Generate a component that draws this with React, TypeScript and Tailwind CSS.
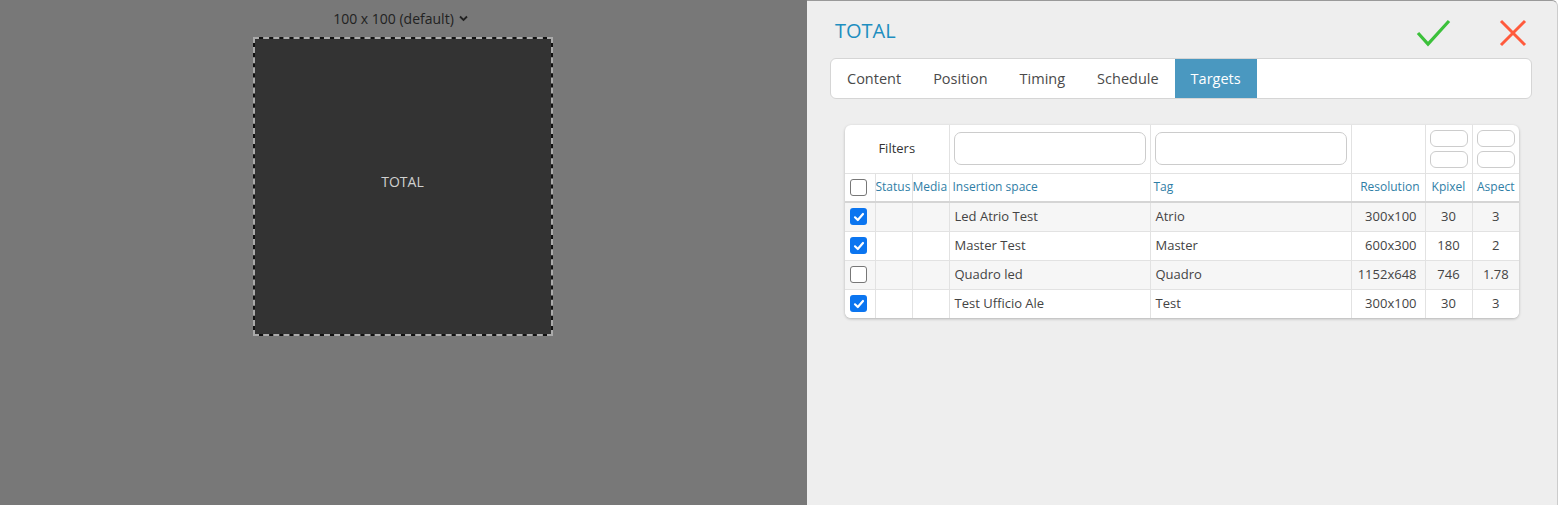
import React from "react";

const font = { fontFamily: '"Open Sans", "Noto Sans", sans-serif' };

type Row = { checked: boolean; name: string; tag: string; res: string; kp: string; asp: string };
const rows: Row[] = [
  { checked: true, name: "Led Atrio Test", tag: "Atrio", res: "300x100", kp: "30", asp: "3" },
  { checked: true, name: "Master Test", tag: "Master", res: "600x300", kp: "180", asp: "2" },
  { checked: false, name: "Quadro led", tag: "Quadro", res: "1152x648", kp: "746", asp: "1.78" },
  { checked: true, name: "Test Ufficio Ale", tag: "Test", res: "300x100", kp: "30", asp: "3" },
];

function Check({ on }: { on: boolean }) {
  if (on)
    return (
      <div className="w-[17px] h-[17px] rounded-[3px] bg-[#0b75f0] flex items-center justify-center">
        <svg width="12" height="12" viewBox="0 0 12 12">
          <path d="M2 6.3 L4.8 9 L10 3" stroke="white" strokeWidth="2.2" fill="none" strokeLinecap="round" strokeLinejoin="round" />
        </svg>
      </div>
    );
  return <div className="w-[17px] h-[17px] rounded-[3px] border border-[#777] bg-white" />;
}

export default function App() {
  return (
    <div className="flex w-[1558px] h-[505px] overflow-hidden" style={font}>
      <div className="w-[807px] h-full bg-[#787878] flex flex-col items-center">
        <div className="h-[37px] flex items-center gap-[5px] text-[14px] text-[#222] -ml-[6px]">
          <span>100 x 100 (default)</span>
          <svg width="9" height="7" viewBox="0 0 9 7">
            <path d="M1 1.5 L4.5 5 L8 1.5" stroke="#222" strokeWidth="1.8" fill="none" />
          </svg>
        </div>
        <div className="bg-[#111] -ml-[2px]">
          <div className="w-[300px] h-[299px] border-2 border-dashed border-[#aaa] bg-[#333] bg-clip-padding flex items-center justify-center">
            <span className="text-[14px] text-[#d0d0d0] -mt-[10px]">TOTAL</span>
          </div>
        </div>
      </div>
      <div className="flex-1 h-full bg-[#eeeeee] border-t border-[#999] rounded-tr-[6px] border-r border-r-[#ccc] flex flex-col">
        <div className="h-[57px] flex items-center pl-[28px] pr-[30px] justify-between">
          <span className="text-[20px] text-[#1e8ec0] mt-[2px]">TOTAL</span>
          <div className="flex items-center gap-[48px] mt-[6px]">
            <svg width="36" height="28" viewBox="0 0 36 28">
              <path d="M3 14 L13 25 L34 2" stroke="#3cc13b" strokeWidth="3.2" fill="none" />
            </svg>
            <svg width="28" height="28" viewBox="0 0 28 28">
              <path d="M2 2 L26 26 M26 2 L2 26" stroke="#ff5a3c" strokeWidth="3" fill="none" />
            </svg>
          </div>
        </div>
        <div className="ml-[23px] mr-[25px] h-[41px] bg-white border border-[#d5d5d5] rounded-[6px] flex items-stretch text-[14.5px] text-[#4a4a4a] overflow-hidden">
          <div className="px-[16px] flex items-center">Content</div>
          <div className="px-[16px] flex items-center">Position</div>
          <div className="px-[16px] flex items-center">Timing</div>
          <div className="px-[16px] flex items-center">Schedule</div>
          <div className="px-[16px] flex items-center bg-[#4a98c0] text-white">Targets</div>
        </div>
        <div className="mt-[26px] ml-[38px] w-[674px] bg-white rounded-[6px] shadow-[0_1px_3px_rgba(0,0,0,0.25)] overflow-hidden">
          <table className="w-full border-collapse table-fixed text-[13px] text-[#444]">
            <colgroup>
              <col className="w-[30px]" />
              <col className="w-[37px]" />
              <col className="w-[37px]" />
              <col className="w-[201px]" />
              <col className="w-[201px]" />
              <col className="w-[74px]" />
              <col className="w-[47px]" />
              <col className="w-[47px]" />
            </colgroup>
            <tbody>
              <tr className="h-[48px]">
                <td colSpan={3} className="border-r border-[#e2e2e2] text-center text-[13px] text-[#333]">Filters</td>
                <td className="border-r border-[#e2e2e2] px-[4px]">
                  <div className="h-[33px] rounded-[7px] border border-[#ccc]" />
                </td>
                <td className="border-r border-[#e2e2e2] px-[4px]">
                  <div className="h-[33px] rounded-[7px] border border-[#ccc]" />
                </td>
                <td className="border-r border-[#e2e2e2]" />
                <td className="border-r border-[#e2e2e2] px-[4px]">
                  <div className="flex flex-col gap-[4px]">
                    <div className="h-[17px] rounded-[6px] border border-[#ccc]" />
                    <div className="h-[17px] rounded-[6px] border border-[#ccc]" />
                  </div>
                </td>
                <td className="px-[4px]">
                  <div className="flex flex-col gap-[4px]">
                    <div className="h-[17px] rounded-[6px] border border-[#ccc]" />
                    <div className="h-[17px] rounded-[6px] border border-[#ccc]" />
                  </div>
                </td>
              </tr>
              <tr className="h-[29px] border-t border-[#e2e2e2] border-b-2 border-b-[#d5d5d5] text-[12px] text-[#2f7ea6]">
                <td className="border-r border-[#e2e2e2] pl-[5px]"><Check on={false} /></td>
                <td className="border-r border-[#e2e2e2] whitespace-nowrap overflow-hidden">Status</td>
                <td className="border-r border-[#e2e2e2] whitespace-nowrap overflow-hidden">Media</td>
                <td className="border-r border-[#e2e2e2] px-[3px]">Insertion space</td>
                <td className="border-r border-[#e2e2e2] px-[3px]">Tag</td>
                <td className="border-r border-[#e2e2e2] text-right pr-[5px]">Resolution</td>
                <td className="border-r border-[#e2e2e2] text-center">Kpixel</td>
                <td className="text-center">Aspect</td>
              </tr>
              {rows.map((r, i) => (
                <tr key={i} className={`h-[29px] ${i > 0 ? "border-t border-[#e2e2e2]" : ""} ${i % 2 === 0 ? "bg-[#f6f6f6]" : "bg-white"}`}>
                  <td className="border-r border-[#e2e2e2] pl-[5px]"><Check on={r.checked} /></td>
                  <td className="border-r border-[#e2e2e2]" />
                  <td className="border-r border-[#e2e2e2]" />
                  <td className="border-r border-[#e2e2e2] px-[5px]">{r.name}</td>
                  <td className="border-r border-[#e2e2e2] px-[5px]">{r.tag}</td>
                  <td className="border-r border-[#e2e2e2] text-right pr-[8px]">{r.res}</td>
                  <td className="border-r border-[#e2e2e2] text-center">{r.kp}</td>
                  <td className="text-center">{r.asp}</td>
                </tr>
              ))}
            </tbody>
          </table>
        </div>
      </div>
    </div>
  );
}
